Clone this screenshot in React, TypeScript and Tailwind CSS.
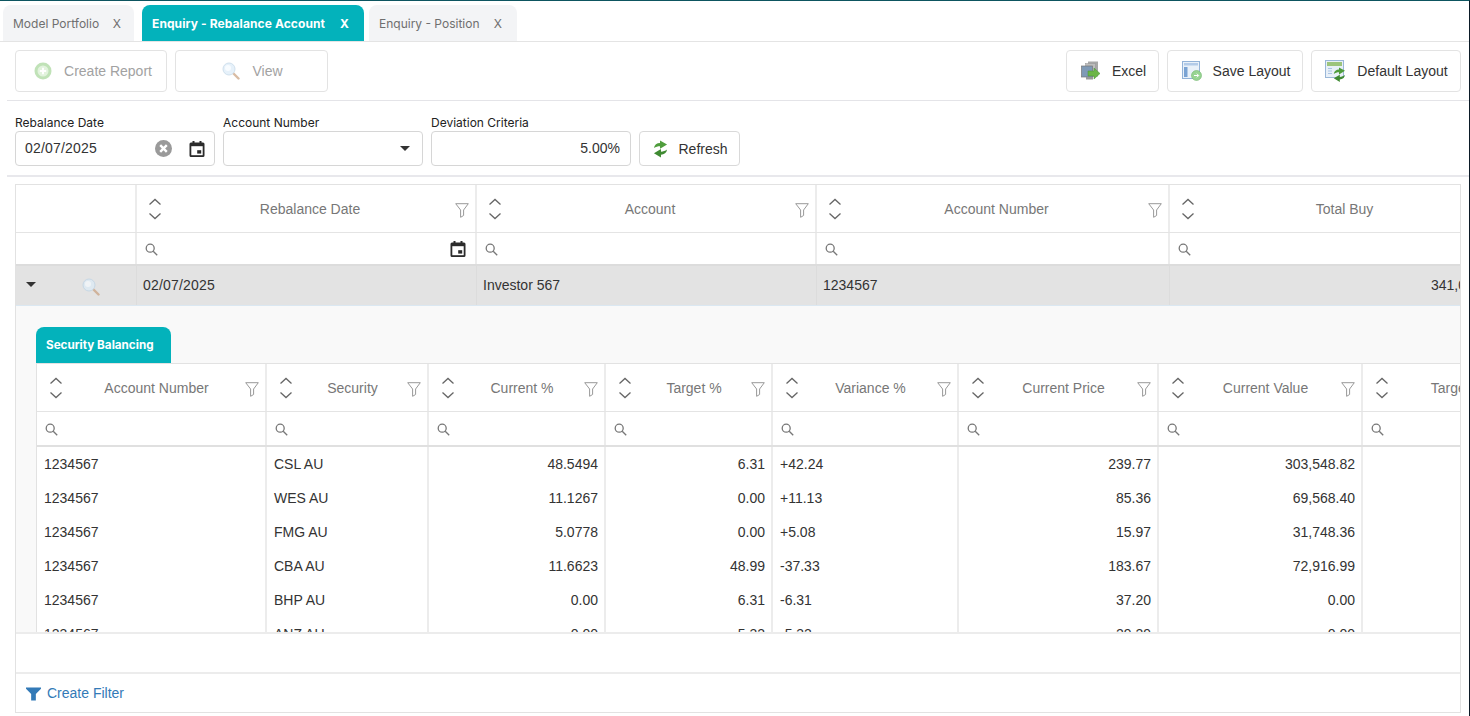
import React from 'react';

const SortIcon = () => (
  <svg width="14" height="24" viewBox="0 0 14 24" fill="none" stroke="#666" strokeWidth="1.3" className="shrink-0">
    <path d="M1.5 7.5 7 2.5l5.5 5" />
    <path d="M1.5 16.5 7 21.5l5.5-5" />
  </svg>
);

const FilterIcon = () => (
  <svg width="14" height="15" viewBox="0 0 14 15" fill="none" stroke="#999" strokeWidth="1" className="shrink-0 mt-[3px]">
    <path d="M.7.7h12.6L8.6 7v5.5l-3 1.8V7z" />
  </svg>
);

const SearchIcon = () => (
  <svg width="13" height="13" viewBox="0 0 13 13" fill="none" stroke="#777" strokeWidth="1.3" className="shrink-0 mt-[2px]">
    <circle cx="5.2" cy="5.2" r="4" />
    <path d="m8.2 8.2 4 4" />
  </svg>
);

const CalendarIcon = () => (
  <svg width="16" height="16" viewBox="0 0 16 16" className="shrink-0">
    <path d="M3.5 0h2v1.5h5V0h2v1.5H14a1.5 1.5 0 0 1 1.5 1.5v11.5A1.5 1.5 0 0 1 14 16H2a1.5 1.5 0 0 1-1.5-1.5V3A1.5 1.5 0 0 1 2 1.5h1.5z" fill="#2b2b2b" />
    <rect x="2.3" y="5.2" width="11.4" height="9" fill="#fff" />
    <rect x="8.2" y="9.2" width="4" height="3.4" fill="#2b2b2b" />
  </svg>
);

const ClearIcon = () => (
  <svg width="17" height="17" viewBox="0 0 17 17" className="shrink-0">
    <circle cx="8.5" cy="8.5" r="8.5" fill="#9a9a9a" />
    <path d="m5.2 5.2 6.6 6.6M11.8 5.2l-6.6 6.6" stroke="#fff" strokeWidth="2.4" />
  </svg>
);

const arrowTop = 'M1 8C1.5 4.5 4 2.5 7.5 2.5V0L15 4.2 7.5 8.6V6C5 6 3 6.6 1 8z';
const arrowBottom = 'M15 9.5c-.5 3.5-3 5.5-6.5 5.5V18L1 13.4 8.5 9v2.8c2.5 0 4.5-.9 6.5-2.3z';

const GreenArrows = () => (
  <svg width="15" height="18" viewBox="0 0 16 18" className="shrink-0">
    <path d={arrowTop} fill="#4f9d3c" />
    <path d={arrowBottom} fill="#3f8a32" />
  </svg>
);

const PlusCircle = () => (
  <svg width="18" height="18" viewBox="0 0 18 18" className="shrink-0">
    <circle cx="9" cy="9" r="8.5" fill="#a6d69a" />
    <circle cx="9" cy="9" r="5.5" fill="#d6eed0" />
    <path d="M9 5.8v6.4M5.8 9h6.4" stroke="#fff" strokeWidth="2" />
  </svg>
);

const Magnifier = () => (
  <svg width="18" height="18" viewBox="0 0 18 18" className="shrink-0">
    <path d="m10.5 10.5 6 6" stroke="#c9a07e" strokeWidth="2.4" strokeLinecap="round" />
    <circle cx="7" cy="7" r="6" fill="#dcecf8" stroke="#bcd3e6" />
    <circle cx="6" cy="6" r="3" fill="#f6fbff" />
  </svg>
);

const ExcelIcon = () => (
  <svg width="20" height="20" viewBox="0 0 20 20" className="shrink-0">
    <rect x="7" y="0.5" width="10" height="15" fill="#a8a8a8" />
    <rect x="4.5" y="2.5" width="10" height="13" fill="#bdbdbd" stroke="#949494" strokeWidth="0.5" />
    <rect x="0.5" y="5" width="11" height="11" fill="#7f9ab6" stroke="#777" strokeWidth="0.7" />
    <rect x="5" y="16" width="7" height="2.5" fill="#999" />
    <path d="M7 10h6V7l6 5.5-6 5.5v-3H7z" fill="#6cb548" stroke="#479437" strokeWidth="0.5" />
  </svg>
);

const SaveLayoutIcon = () => (
  <svg width="20" height="20" viewBox="0 0 20 20" className="shrink-0">
    <rect x="0.5" y="0.5" width="17" height="17" fill="#e9f1f9" stroke="#93b3d8" />
    <rect x="2" y="2" width="14" height="2.5" fill="#b3cbe8" />
    <rect x="2" y="6" width="3.5" height="10" fill="#7aa3d3" />
    <circle cx="14.5" cy="14.5" r="5" fill="#97d492" stroke="#73b76e" strokeWidth="0.6" />
    <path d="M12 14.5h4.5m-1.6-1.8 1.8 1.8-1.8 1.8" stroke="#fff" strokeWidth="1" fill="none" />
  </svg>
);

const DefaultLayoutIcon = () => (
  <svg width="22" height="22" viewBox="0 0 22 22" className="shrink-0">
    <rect x="0.5" y="0.5" width="18" height="17" fill="#e8f0f8" stroke="#9ab7d8" />
    <rect x="2" y="2" width="15" height="4" fill="#9cc47c" />
    <path d="M3 8.5h4M3 11h4M3 13.5h4" stroke="#a9c4e4" strokeWidth="1.2" />
    <g transform="translate(8 7.5) scale(.8)">
      <path d={arrowTop} fill="#4f9d3c" />
      <path d={arrowBottom} fill="#3f8a32" />
    </g>
  </svg>
);

const Tab = ({ label, active, className }: { label: string; active?: boolean; className: string }) => (
  <div
    className={`h-[36px] pt-[1px] flex items-center justify-between rounded-t-lg font-['Inter',sans-serif] text-[12px] ${
      active ? 'bg-[#03b2bb] text-white font-bold tracking-[0.1px]' : 'bg-[#f3f4f6] text-[#6f6f6f]'
    } ${className}`}
  >
    <span>{label}</span>
    <span>X</span>
  </div>
);

const ToolButton = ({
  icon,
  label,
  disabled,
  className,
}: {
  icon: React.ReactNode;
  label: string;
  disabled?: boolean;
  className: string;
}) => (
  <button
    className={`h-[42px] flex items-center justify-center rounded border border-[#e3e3e3] text-[14px] bg-white ${
      disabled ? 'text-[#a2a2a2]' : 'text-[#333]'
    } ${className}`}
  >
    <span className={disabled ? 'opacity-70' : ''}>{icon}</span>
    <span>{label}</span>
  </button>
);

const Label = ({ children }: { children: React.ReactNode }) => (
  <label className="block h-[16px] leading-[15px] text-[12px] text-[#222] font-['Inter',sans-serif]">{children}</label>
);

const HeaderCell = ({ label, outer }: { label?: string; outer?: boolean }) => (
  <div
    className={`h-full min-w-0 flex items-center pr-[6px] border-r-2 border-[#ececec] text-[14px] text-[#777] ${
      outer ? 'pl-[11px]' : 'pl-[12px]'
    }`}
  >
    {label && <SortIcon />}
    <span className={`flex-1 text-center whitespace-nowrap pt-[2px] ${outer ? 'pl-[3px]' : 'pl-[5px]'}`}>{label}</span>
    {label && <FilterIcon />}
  </div>
);

const SearchCell = ({ calendar }: { calendar?: boolean }) => (
  <div className="h-full flex items-center justify-between pl-[8px] pr-[9px] border-r-2 border-[#ececec]">
    <SearchIcon />
    {calendar && <CalendarIcon />}
  </div>
);

const outerCols = 'grid grid-cols-[121px_340px_340px_353px_343px] w-[1497px]';
const innerCols = 'grid grid-cols-[230px_162px_177px_167px_186px_200px_204px_204px] w-[1530px]';

const innerHeaders = ['Account Number', 'Security', 'Current %', 'Target %', 'Variance %', 'Current Price', 'Current Value', 'Target Value'];

const securityRows = [
  ['1234567', 'CSL AU', '48.5494', '6.31', '+42.24', '239.77', '303,548.82'],
  ['1234567', 'WES AU', '11.1267', '0.00', '+11.13', '85.36', '69,568.40'],
  ['1234567', 'FMG AU', '5.0778', '0.00', '+5.08', '15.97', '31,748.36'],
  ['1234567', 'CBA AU', '11.6623', '48.99', '-37.33', '183.67', '72,916.99'],
  ['1234567', 'BHP AU', '0.00', '6.31', '-6.31', '37.20', '0.00'],
  ['1234567', 'ANZ AU', '0.00', '5.32', '-5.32', '29.29', '0.00'],
];

const isRight = [false, false, true, true, false, true, true, true];

export default function App() {
  return (
    <div className="relative w-[1470px] h-[716px] overflow-hidden bg-white border-t border-[#0d5560] border-r border-r-[#0b1a26] font-['Liberation_Sans',Arial,sans-serif] text-[#333]">
      {/* Tabs */}
      <div className="h-[41px] pt-[4px] pl-[3px] flex border-b border-[#e4e4e4]">
        <Tab label="Model Portfolio" className="w-[131px] pl-[10px] pr-[13px]" />
        <Tab label="Enquiry - Rebalance Account" active className="w-[222px] ml-[8px] pl-[10px] pr-[15px]" />
        <Tab label="Enquiry - Position" className="w-[148px] ml-[5px] pl-[10px] pr-[15px]" />
      </div>

      {/* Toolbar */}
      <div className="ml-[7px] h-[59px] border-b border-[#e4e4e8] pl-[8px] pr-[8px] flex items-center justify-between">
        <div className="flex gap-[8px]">
          <ToolButton disabled icon={<PlusCircle />} label="Create Report" className="w-[152px] gap-[12px] pl-[4px]" />
          <ToolButton disabled icon={<Magnifier />} label="View" className="w-[153px] gap-[12px] pl-[2px]" />
        </div>
        <div className="flex gap-[8px]">
          <ToolButton icon={<ExcelIcon />} label="Excel" className="w-[93px] gap-[11px] pl-[2px]" />
          <ToolButton icon={<SaveLayoutIcon />} label="Save Layout" className="w-[136px] gap-[11px] pl-[2px]" />
          <ToolButton icon={<DefaultLayoutIcon />} label="Default Layout" className="w-[150px] gap-[10px] pl-[1px]" />
        </div>
      </div>

      {/* Criteria */}
      <div className="ml-[7px] h-[76px] border-b-2 border-[#e8e8ec] pl-[8px] pt-[14px] flex items-start gap-[8px]">
        <div className="w-[200px]">
          <Label>Rebalance Date</Label>
          <div className="h-[35px] flex items-center rounded border border-[#d6d6d6] pl-[9px] pr-[9px] text-[14px] tracking-[0.2px]">
            <span className="flex-1">02/07/2025</span>
            <ClearIcon />
            <span className="ml-[17px]"><CalendarIcon /></span>
          </div>
        </div>
        <div className="w-[200px]">
          <Label>Account Number</Label>
          <div className="h-[35px] flex items-center justify-end rounded border border-[#d6d6d6] pr-[12px]">
            <span className="w-0 h-0 border-l-[5px] border-r-[5px] border-t-[5px] border-l-transparent border-r-transparent border-t-[#333]" />
          </div>
        </div>
        <div className="w-[200px]">
          <Label>Deviation Criteria</Label>
          <div className="h-[35px] flex items-center justify-end rounded border border-[#d6d6d6] pr-[10px] text-[14px]">5.00%</div>
        </div>
        <button className="mt-[16px] w-[101px] h-[35px] pl-[2px] flex items-center justify-center gap-[10px] rounded border border-[#d9d9d9] text-[14px]">
          <GreenArrows />
          <span className="pt-[1px]">Refresh</span>
        </button>
      </div>

      {/* Main grid */}
      <div className="ml-[15px] mt-[7px] w-[1446px] h-[529px] border border-[#e2e2e2] overflow-hidden">
        <div className={`${outerCols} h-[48px] border-b border-[#e4e4e4]`}>
          <HeaderCell />
          <HeaderCell outer label="Rebalance Date" />
          <HeaderCell outer label="Account" />
          <HeaderCell outer label="Account Number" />
          <HeaderCell outer label="Total Buy" />
        </div>
        <div className={`${outerCols} h-[33px] border-b-2 border-[#dcdcdc]`}>
          <div className="border-r-2 border-[#ececec]" />
          <SearchCell calendar />
          <SearchCell />
          <SearchCell />
          <SearchCell />
        </div>
        <div className={`${outerCols} h-[40px] bg-[#e3e3e3] border-b border-[#dbe8f2] text-[14px]`}>
          <div className="flex items-center pl-[10px] pr-[36px] justify-between border-r border-[#dcdcdc]">
            <span className="w-0 h-0 border-l-[5px] border-r-[5px] border-t-[5px] border-l-transparent border-r-transparent border-t-[#333] -mt-[3px]" />
            <span className="opacity-70 mt-[3px]"><Magnifier /></span>
          </div>
          <div className="flex items-center pl-[6px] border-r border-[#dcdcdc] tracking-[0.2px]">02/07/2025</div>
          <div className="flex items-center pl-[6px] border-r border-[#dcdcdc]">Investor 567</div>
          <div className="flex items-center pl-[6px] border-r border-[#dcdcdc]">1234567</div>
          <div className="flex items-center justify-end pr-[12px]">341,000.00</div>
        </div>

        {/* Detail row */}
        <div className="h-[326px] bg-[#f9f9f9] pl-[20px] pt-[21px] overflow-hidden">
          <div className="w-[135px] h-[36px] rounded-t-lg bg-[#03b2bb] text-white font-bold text-[11.7px] font-['Inter',sans-serif] flex items-center pl-[10px] pt-[1px]">
            Security Balancing
          </div>
          <div className="bg-white border-l border-t border-[#e2e2e2]">
            <div className={`${innerCols} h-[48px] border-b border-[#e4e4e4]`}>
              {innerHeaders.map((h) => (
                <HeaderCell key={h} label={h} />
              ))}
            </div>
            <div className={`${innerCols} h-[35px] border-b-2 border-[#e0e0e0]`}>
              {innerHeaders.map((h) => (
                <SearchCell key={h} />
              ))}
            </div>
            {securityRows.map((row) => (
              <div key={row[1]} className={`${innerCols} h-[34px] text-[14px]`}>
                {innerHeaders.map((h, i) => (
                  <div
                    key={h}
                    className={`flex items-center pl-[7px] pr-[6px] border-r-2 border-[#ececec] ${isRight[i] ? 'justify-end' : ''}`}
                  >
                    {row[i]}
                  </div>
                ))}
              </div>
            ))}
          </div>
        </div>

        {/* Footer */}
        <div className="h-[40px] border-t-2 border-[#ececec]" />
        <div className="h-[39px] pt-[2px] border-t-2 border-[#ececec] flex items-center pl-[10px] gap-[6px] text-[14px] text-[#337ab7]">
          <svg width="15" height="14" viewBox="0 0 16 14" className="shrink-0">
            <path d="M0 0h16v1.5L10.5 7v7h-5V7L0 1.5z" fill="#337ab7" />
          </svg>
          <span>Create Filter</span>
        </div>
      </div>
    </div>
  );
}
